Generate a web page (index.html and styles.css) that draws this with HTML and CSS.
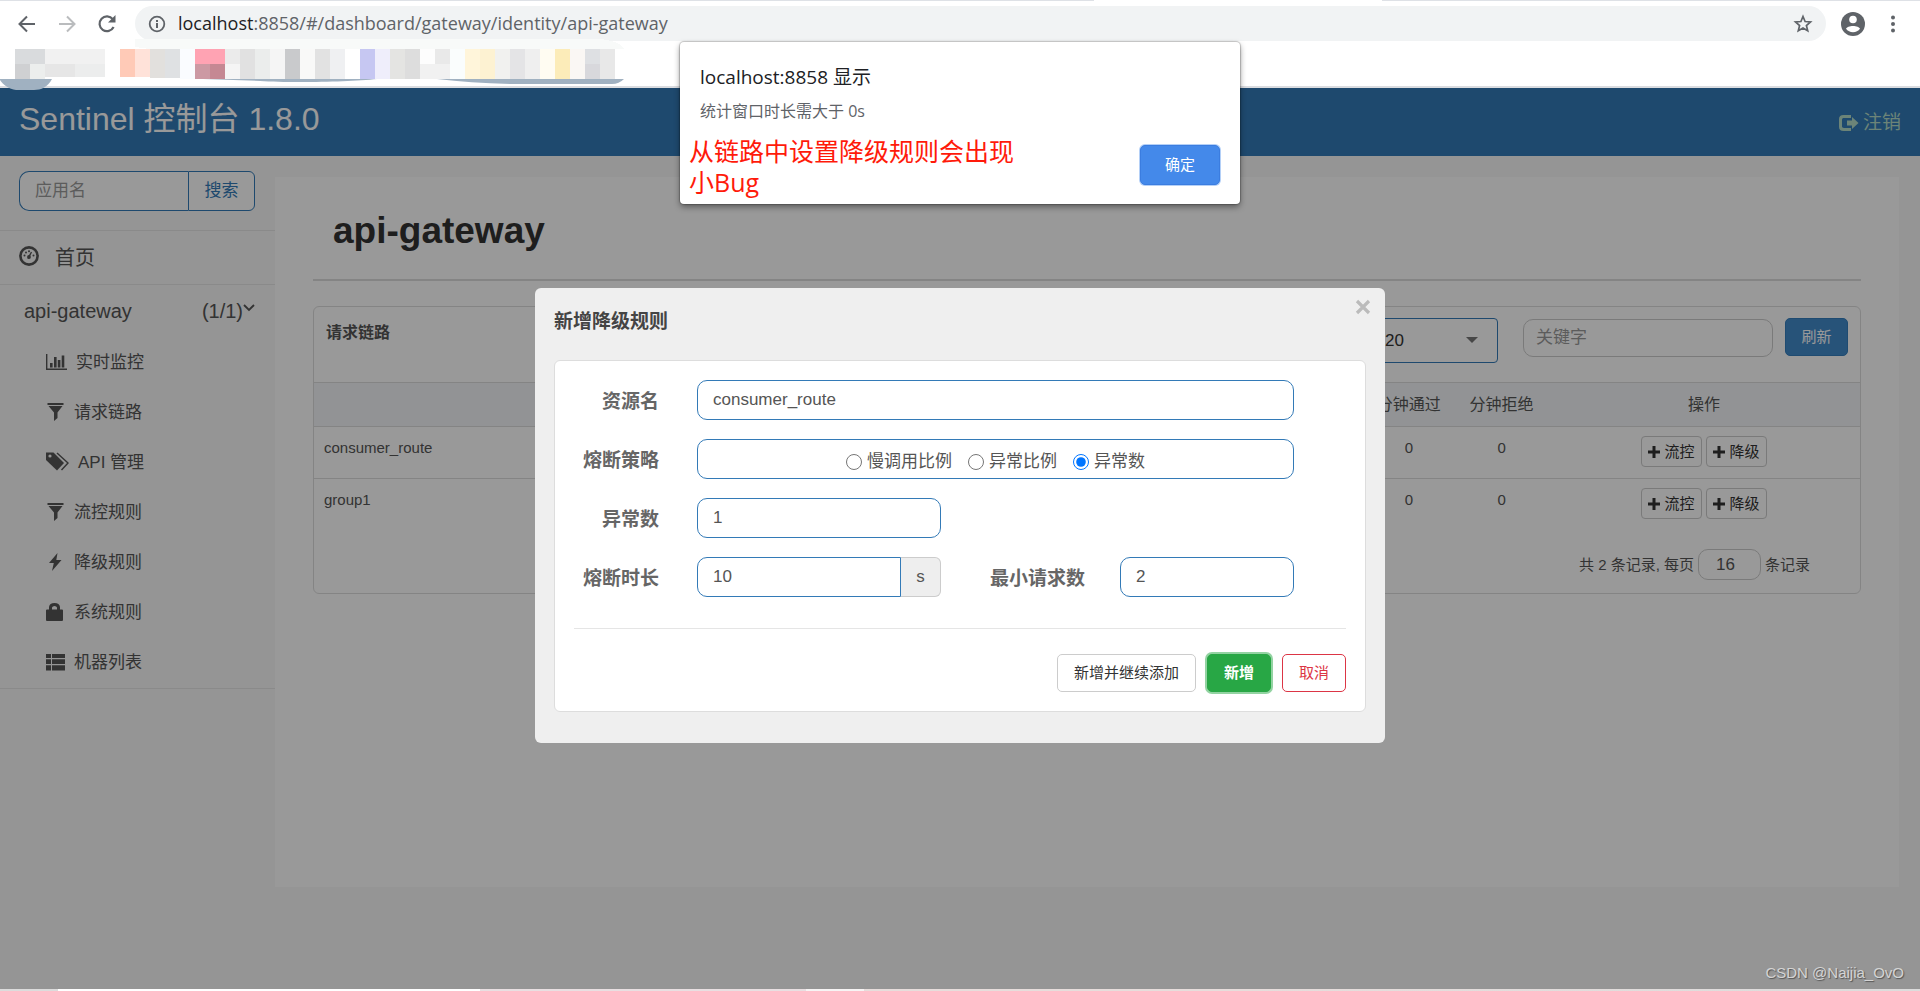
FILE: index.html
```html
<!DOCTYPE html>
<html lang="zh-CN">
<head>
<meta charset="utf-8">
<title>Sentinel 控制台 1.8.0</title>
<link rel="stylesheet" href="styles.css">
</head>
<body>
<header class="chrome">
  <div class="tabline"><span class="tabline-left"></span><span class="tabline-right"></span></div>
  <div class="toolbar">
    <button class="nav-btn" aria-label="Back"><svg width="20" height="20" viewBox="0 0 20 20" fill="none" stroke="#5f6368" stroke-width="2"><path d="M18 10H3M10 2.500L2.500 10L10 17.500"/></svg></button>
    <button class="nav-btn" aria-label="Forward"><svg width="20" height="20" viewBox="0 0 20 20" fill="none" stroke="#babcbe" stroke-width="2"><path d="M2 10H17M10 2.500L17.500 10L10 17.500"/></svg></button>
    <button class="nav-btn" aria-label="Reload"><svg width="20" height="20" viewBox="0 0 20 20"><path d="M16.600 13A7.400 7.400 0 1 1 15.800 5.200" fill="none" stroke="#5f6368" stroke-width="2.200"/><path d="M18.500 1V8.500H11z" fill="#5f6368"/></svg></button>
    <div class="omnibox">
      <svg width="18" height="18" viewBox="0 0 18 18"><circle cx="9" cy="9" r="7.300" fill="none" stroke="#5f6368" stroke-width="1.800"/><path d="M8 8h2v5H8zM8 5h2v2H8z" fill="#5f6368"/></svg>
      <span class="url"><b>localhost</b>:8858/#/dashboard/gateway/identity/api-gateway</span>
      <svg class="star" width="20" height="20" viewBox="0 0 20 20"><path d="M10 2.500l2.100 5 5.400.500-4.100 3.500 1.300 5.300L10 14l-4.700 2.800 1.300-5.300L2.500 8l5.400-.500z" fill="none" stroke="#5f6368" stroke-width="1.700"/></svg>
    </div>
    <svg class="avatar" width="24" height="24" viewBox="0 0 24 24"><circle cx="12" cy="12" r="12" fill="#5f6368"/><circle cx="12" cy="7.500" r="3.800" fill="#fff"/><path d="M5 16.800c1-3.900 13-3.900 14 0c-3 4.600-11 4.600-14 0z" fill="#fff"/></svg>
    <svg class="kebab" width="6" height="20" viewBox="0 0 6 20" fill="#5f6368"><circle cx="3" cy="3.500" r="2"/><circle cx="3" cy="10" r="2"/><circle cx="3" cy="16.500" r="2"/></svg>
  </div>
  <svg class="bookmarks" width="640" height="52" viewBox="0 0 640 52" shape-rendering="crispEdges">
    <path d="M135 0H600Q620 2 624 10H150L135 8z" fill="#f8faf9"/>
    <g>
      <path fill="#d9dbdd" d="M15 10h30v15H15z"/><path fill="#f1f1f1" d="M45 10h60v15H45z"/>
      <path fill="#cfd0d2" d="M15 25h15v15H15z"/><path fill="#eceeed" d="M30 25h15v15H30z"/><path fill="#e6e6e6" d="M45 25h30v13H45z"/><path fill="#eceded" d="M75 25h30v13H75z"/>
      <path fill="#ffcab7" d="M120 10h15v28h-15z"/><path fill="#ffe2d9" d="M135 10h15v28h-15z"/><path fill="#e2e0dd" d="M150 10h15v29h-15z"/><path fill="#dfe1e3" d="M165 10h15v29h-15z"/><path fill="#fafcff" d="M180 10h15v30h-15z"/>
      <path fill="#ffa3b3" d="M195 10h30v15h-30z"/><path fill="#cc99a3" d="M195 25h15v15h-15z"/><path fill="#c58893" d="M210 25h15v15h-15z"/>
      <path fill="#ebebeb" d="M225 10h15v15h-15z"/><path fill="#f5f5f5" d="M225 25h15v15h-15z"/><path fill="#e1e1e1" d="M240 10h15v30h-15z"/><path fill="#ebedec" d="M255 10h15v30h-15z"/><path fill="#f5f5f5" d="M270 10h15v30h-15z"/><path fill="#c9cacc" d="M285 10h15v30h-15z"/><path fill="#f9f9f8" d="M300 10h15v30h-15z"/><path fill="#e2e2e2" d="M315 10h15v30h-15z"/><path fill="#eff0f2" d="M330 10h15v30h-15z"/>
      <path fill="#c6c7f2" d="M360 10h15v30h-15z"/><path fill="#efeefb" d="M375 10h15v30h-15z"/><path fill="#e4e4e2" d="M390 10h15v30h-15z"/><path fill="#dddddd" d="M405 10h15v30h-15z"/><path fill="#fdfdfd" d="M420 10h15v15h-15z"/><path fill="#e9e9e9" d="M435 10h15v15h-15z"/><path fill="#f1f1f1" d="M420 25h30v15h-30z"/><path fill="#fafdfd" d="M450 10h15v30h-15z"/>
      <path fill="#fff5da" d="M465 10h15v30h-15z"/><path fill="#fdf2d2" d="M480 10h15v30h-15z"/><path fill="#f1f1ef" d="M495 10h15v30h-15z"/><path fill="#e4e4e6" d="M510 10h15v30h-15z"/><path fill="#efefef" d="M525 10h15v30h-15z"/><path fill="#fffcf2" d="M540 10h15v30h-15z"/><path fill="#fcecb9" d="M555 10h15v30h-15z"/><path fill="#faf7f4" d="M570 10h15v30h-15z"/><path fill="#dee0e3" d="M585 10h15v15h-15z"/><path fill="#d8d8dc" d="M585 25h15v15h-15z"/><path fill="#e8e8e8" d="M600 10h15v30h-15z"/>
    </g>
    <g fill="#a0b1c1" shape-rendering="auto"><path d="M0 40H52C48 48 41 51 34 51H16C9 50 3 46 0 41z"/><path d="M203 40H377C350 43 290 44 260 42z"/><path d="M437 40H624Q619 45 612 45H510Q470 44 437 40z"/></g>
  </svg>
</header>

<div class="app">
  <header class="topbar">
    <span class="brand">Sentinel 控制台 1.8.0</span>
    <a class="logout" href="#"><svg width="21" height="18" viewBox="0 0 21 18" fill="currentColor"><path d="M13 1H5.500C2.500 1 1 2.500 1 5v8c0 2.500 1.500 4 4.500 4H13v-3H6c-1.300 0-2-.500-2-1.700V5.700C4 4.500 4.700 4 6 4h7z"/><path d="M9 6.500h5V3l6.500 6L14 15v-3.500H9z"/></svg>注销</a>
  </header>
  <div class="body">
    <nav class="sidebar">
      <form class="search"><input type="text" placeholder="应用名" aria-label="应用名"><button type="button">搜索</button></form>
      <a class="home" href="#"><svg width="20" height="20" viewBox="0 0 20 20"><circle cx="10" cy="10" r="8.600" fill="none" stroke="#555" stroke-width="2.600"/><path d="M9 12.500L12.500 6" stroke="#555" stroke-width="1.400"/><circle cx="10" cy="11" r="1.900" fill="#555"/><g fill="#555"><circle cx="5.500" cy="9.500" r="1"/><circle cx="7" cy="6.500" r="1"/><circle cx="10" cy="5.200" r="1"/><circle cx="14.500" cy="9.500" r="1"/></g></svg>首页</a>
      <div class="group">
        <a class="group-head" href="#"><span>api-gateway</span><span class="count">(1/1)<svg width="12" height="8" viewBox="0 0 12 8" fill="none" stroke="#555" stroke-width="1.800"><path d="M1 1L6 6L11 1"/></svg></span></a>
        <ul>
          <li><a href="#"><svg width="21" height="18" viewBox="0 0 21 18" fill="#555"><path d="M0 1h1.400v14.600H21V17H0z"/><path d="M4 10h2.600v4.500H4zM8 4h2.600v10.500H8zM11.800 7h2.600v7.500h-2.600zM15.700 2.500h2.600v12h-2.600z"/></svg>实时监控</a></li>
          <li><a href="#"><svg width="19" height="18" viewBox="0 0 19 18" fill="#555"><path d="M1.500 0h16v2h-16zM2.500 3h14L11.500 9.500V15L8 18V9.500z"/></svg>请求链路</a></li>
          <li><a href="#"><svg width="23" height="19" viewBox="0 0 23 19"><path d="M0 .500h7.500L18 11L11 18.500L0 8z" fill="#555"/><circle cx="4" cy="4" r="1.600" fill="#f8f8f8"/><path d="M11 1L22 11L15.500 18" fill="none" stroke="#555" stroke-width="1.400"/></svg>API 管理</a></li>
          <li><a href="#"><svg width="19" height="18" viewBox="0 0 19 18" fill="#555"><path d="M1.500 0h16v2h-16zM2.500 3h14L11.500 9.500V15L8 18V9.500z"/></svg>流控规则</a></li>
          <li><a href="#"><svg width="19" height="18" viewBox="0 0 19 18" fill="#555"><path d="M11.500 0L3 10h4.800L6 18L15.500 7H10.300z"/></svg>降级规则</a></li>
          <li><a href="#"><svg width="19" height="18" viewBox="0 0 19 18" fill="#555"><path d="M0 7.500Q0 6.500 1 6.500H3V4Q3.500 0 8.500 0T14 4V6.500H16Q17 6.500 17 7.500V17Q17 18 16 18H1Q0 18 0 17zM6 6.500H11V4.500Q10.500 3 8.500 3T6 4.500z"/></svg>系统规则</a></li>
          <li><a href="#"><svg width="19" height="18" viewBox="0 0 19 18" fill="#555"><path d="M0 1h5v4H0zM6 1h13v4H6zM0 6.300h5v4.700H0zM6 6.300h13v4.700H6zM0 12.300h5v5.200H0zM6 12.300h13v5.200H6z"/></svg>机器列表</a></li>
        </ul>
      </div>
    </nav>
    <main class="content">
      <h1>api-gateway</h1>
      <section class="card">
        <div class="card-head">
          <h2>请求链路</h2>
          <div class="filters">
            <span class="picker"><select aria-label="机器"><option>20</option></select></span>
            <input class="keyword" type="text" placeholder="关键字" aria-label="关键字">
            <button class="refresh">刷新</button>
          </div>
        </div>
        <table>
          <colgroup><col><col class="num"><col class="num"><col class="ops"></colgroup>
          <thead><tr><th></th><th>分钟通过</th><th>分钟拒绝</th><th>操作</th></tr></thead>
          <tbody>
            <tr><td>consumer_route</td><td>0</td><td>0</td><td><button class="mini"><svg width="12" height="12" viewBox="0 0 12 12"><path d="M4.500 0h3v4.500H12v3H7.500V12h-3V7.500H0v-3h4.500z"/></svg>流控</button><button class="mini"><svg width="12" height="12" viewBox="0 0 12 12"><path d="M4.500 0h3v4.500H12v3H7.500V12h-3V7.500H0v-3h4.500z"/></svg>降级</button></td></tr>
            <tr><td>group1</td><td>0</td><td>0</td><td><button class="mini"><svg width="12" height="12" viewBox="0 0 12 12"><path d="M4.500 0h3v4.500H12v3H7.500V12h-3V7.500H0v-3h4.500z"/></svg>流控</button><button class="mini"><svg width="12" height="12" viewBox="0 0 12 12"><path d="M4.500 0h3v4.500H12v3H7.500V12h-3V7.500H0v-3h4.500z"/></svg>降级</button></td></tr>
          </tbody>
        </table>
        <div class="pager"><label for="size">共 2 条记录, 每页</label><input id="size" type="text" value="16"><span>条记录</span></div>
      </section>
    </main>
  </div>

  <div class="overlay">
    <form class="modal" role="dialog" aria-labelledby="mtitle">
      <button type="button" class="close" aria-label="关闭"><svg width="16" height="16" viewBox="0 0 16 16" stroke="#bbb" stroke-width="3.200"><path d="M2 2L14 14M14 2L2 14"/></svg></button>
      <h2 id="mtitle">新增降级规则</h2>
      <div class="sheet">
        <div class="row"><label for="res">资源名</label><input id="res" type="text" value="consumer_route"></div>
        <div class="row"><span class="label">熔断策略</span>
          <div class="radios">
            <label><input type="radio" name="grade">慢调用比例</label>
            <label><input type="radio" name="grade">异常比例</label>
            <label><input type="radio" name="grade" checked>异常数</label>
          </div>
        </div>
        <div class="row"><label for="cnt">异常数</label><div class="pair"><input id="cnt" class="half" type="text" value="1"></div></div>
        <div class="row"><label for="win">熔断时长</label>
          <div class="pair">
            <div class="half addon"><input id="win" type="text" value="10"><span>s</span></div>
            <label class="mid" for="min">最小请求数</label>
            <input id="min" class="small" type="text" value="2">
          </div>
        </div>
        <div class="actions">
          <button type="button" class="btn">新增并继续添加</button>
          <button type="button" class="btn primary">新增</button>
          <button type="button" class="btn danger">取消</button>
        </div>
      </div>
    </form>
    <span class="watermark">CSDN @Naijia_OvO</span>
  </div>
</div>
<footer class="strip"></footer>

<div class="alert" role="alertdialog" aria-labelledby="atitle">
  <h2 id="atitle">localhost:8858 显示</h2>
  <p class="msg">统计窗口时长需大于 0s</p>
  <div class="alert-foot">
    <p class="note">从链路中设置降级规则会出现小Bug</p>
    <button class="ok">确定</button>
  </div>
</div>
</body>
</html>
```
FILE: styles.css
```css
* { box-sizing: border-box; }
body {
  margin: 0;
  min-height: 100vh;
  display: flex;
  flex-direction: column;
  position: relative;
  background: #fff;
  color: #555;
  font: 17px/24px "Liberation Sans", "Noto Sans CJK SC", sans-serif;
}
h1, h2, p, ul { margin: 0; padding: 0; }
ul { list-style: none; }
a { color: inherit; text-decoration: none; }
svg { flex: none; display: block; }
button, input, select { font: inherit; color: inherit; margin: 0; }
button { padding: 0; }
input { min-width: 0; }

/* browser frame */
.chrome { height: 88px; border-bottom: 2px solid #dadce0; background: #fff; }
.tabline { display: flex; justify-content: space-between; height: 1px; }
.tabline span { background: #dee1e6; }
.tabline-left { width: 57%; }
.tabline-right { width: 28%; }
.toolbar { display: flex; align-items: center; height: 35px; margin-top: 5px; padding: 0 24px 0 17px; }
.nav-btn { width: 20px; margin-right: 20px; border: 0; background: none; }
.nav-btn + .nav-btn + .nav-btn { margin-right: 18px; }
.omnibox { flex: 1; display: flex; align-items: center; height: 35px; padding: 0 13px; border-radius: 18px; background: #f1f3f4; }
.url { margin-left: 12px; padding-bottom: 2px; flex: 1; font: 18px/26px "Open Sans", sans-serif; color: #5f6368; }
.url b { font-weight: 400; color: #202124; }
.avatar { margin-left: 15px; }
.kebab { margin-left: 25px; }
.bookmarks { position: relative; z-index: 3; margin-top: -2px; }

/* application */
.app { position: relative; flex: 1; display: flex; flex-direction: column; background: #f8f8f8; }
.topbar { display: flex; align-items: center; justify-content: space-between; height: 68px; padding: 0 19px; background: #337ab7; color: #fff; }
.brand { font-size: 32px; line-height: 40px; padding-bottom: 6px; }
.logout { display: flex; align-items: center; gap: 4px; padding-top: 2px; font-size: 19px; color: #b4dcc8; }
.body { display: flex; flex: 1; }
.sidebar { width: 275px; flex: none; }
.search { display: flex; height: 75px; padding: 15px 20px 19px 19px; border-bottom: 1px solid #e7e7e7; }
.search input { flex: 1; padding: 0 15px; border: 1px solid #337ab7; border-right: 0; border-radius: 10px 0 0 10px; background: #fff; }
.search button { width: 67px; border: 1px solid #337ab7; border-radius: 0 6px 6px 0; background: #fff; color: #337ab7; }
::placeholder { color: #999; opacity: 1; }
.home { display: flex; align-items: center; gap: 16px; height: 54px; padding-left: 19px; border-bottom: 1px solid #e7e7e7; font-size: 20px; }
.home svg { margin-bottom: 4px; }
.group { border-bottom: 1px solid #e7e7e7; padding: 1px 0 0; }
.group ul { padding-top: 2px; }
.group-head { display: flex; justify-content: space-between; align-items: center; height: 50px; padding: 0 20px 0 24px; font-size: 20px; }
.count { display: flex; align-items: center; }
.count svg { margin-bottom: 7px; }
.group li a { display: flex; align-items: center; gap: 9px; height: 50px; padding-left: 46px; }
.group li svg { margin-bottom: 3px; }

.content { flex: 1; min-height: 710px; margin: 21px 21px 102px 0; padding: 0 38px; background: #fff; }
h1 { height: 104px; padding: 31px 20px 0; border-bottom: 2px solid #ddd; font-size: 37px; line-height: 46px; color: #333; }
.card { margin-top: 25px; border: 1px solid #ddd; border-radius: 6px; }
.card-head { display: flex; justify-content: space-between; height: 75px; padding: 11px 12px 0; }
.card-head h2 { font-size: 16px; line-height: 30px; }
.filters { display: flex; align-items: flex-start; }
.picker { position: relative; width: 300px; margin-right: 25px; }
.picker select { width: 100%; height: 45px; padding: 0 12px 0 186px; border: 1px solid #337ab7; border-radius: 4px; background: #fff; color: #333; appearance: none; }
.picker::after { content: ""; position: absolute; right: 20px; top: 19px; border: 6px solid transparent; border-top-color: #777; border-bottom: 0; }
.keyword { width: 250px; height: 38px; margin: 1px 12px 0 0; padding: 0 12px; border: 1px solid #ccc; border-radius: 10px; }
.refresh { width: 63px; height: 38px; border: 1px solid #357ebd; border-radius: 5px; background: #428bca; color: #fff; font-size: 15px; }
table { width: 100%; border-collapse: collapse; table-layout: fixed; font-size: 15px; }
.num { width: 6%; }
.ops { width: 312px; }
th { height: 44px; padding: 0; border: solid #ddd; border-width: 1px 0; background: #f3f5f8; font-size: 16px; font-weight: 400; }
td { height: 52px; padding: 9px 0 0; vertical-align: top; text-align: center; }
td:first-child { padding-left: 10px; text-align: left; }
tbody tr + tr { border-top: 1px solid #ddd; }
.mini { display: inline-flex; align-items: center; justify-content: center; gap: 4px; width: 61px; height: 31px; border: 1px solid #ccc; border-radius: 4px; background: #fff; color: #333; font-size: 15px; }
.mini svg { fill: #333; }
.mini + .mini { margin-left: 4px; }
.pager { display: flex; align-items: center; justify-content: flex-end; gap: 4px; height: 62px; padding: 6px 50px 0 0; font-size: 15px; }
.pager input { width: 63px; height: 31px; padding: 0 17px; border: 1px solid #ccc; border-radius: 10px; font-size: 17px; }

/* modal */
.overlay { position: absolute; inset: 0; background: rgba(0, 0, 0, .4); padding-top: 200px; }
.modal { position: relative; width: 850px; max-width: 100%; margin: 0 auto; padding: 20px 19px 31px; border-radius: 6px; background: #efefef; }
.modal h2 { font-size: 19px; line-height: 28px; color: #444; }
.close { position: absolute; right: 14px; top: 11px; border: 0; background: none; }
.sheet { margin-top: 24px; padding: 19px; border: 1px solid #ddd; border-radius: 6px; background: #fff; }
.row { display: flex; align-items: center; gap: 38px; height: 40px; margin: 0 52px 19px 0; }
.row > label, .label, .mid { width: 85px; padding-top: 4px; text-align: right; font-size: 19px; font-weight: 700; color: #666; }
.row > input, .radios, .pair { flex: 1; }
.row > input, .radios, .half, .small, .addon input { height: 40px; border: 1px solid #337ab7; border-radius: 10px; background: #fff; }
.row input[type="text"] { padding: 0 15px; }
.radios { display: flex; align-items: center; justify-content: center; gap: 16px; padding-top: 5px; }
.radios label { display: flex; align-items: center; gap: 5px; }
.radios input { width: 16px; height: 16px; accent-color: #0075ff; }
.pair { display: flex; align-items: center; }
.half { width: 244px; }
.half.addon { display: flex; border: 0; }
.addon input { flex: 1; border-radius: 10px 0 0 10px; }
.addon span { width: 40px; border: 1px solid #ccc; border-left: 0; border-radius: 0 6px 6px 0; background: #eee; text-align: center; line-height: 38px; }
.mid { flex: 1; margin-right: 35px; }
.small { width: 174px; }
.actions { display: flex; justify-content: flex-end; gap: 11px; margin-top: 31px; padding-top: 25px; border-top: 1px solid #e5e5e5; }
.btn { height: 38px; padding: 0 16px; border: 1px solid #ccc; border-radius: 5px; background: #fff; color: #333; font-size: 15px; }
.primary { border-color: #28a745; background: #28a745; color: #fff; font-weight: 700; box-shadow: 0 0 0 2px #93d3a2; }
.danger { border-color: #dc3545; color: #dc3545; }
.watermark { position: absolute; right: 16px; bottom: 4px; font-size: 15px; color: #d4d4d4; text-shadow: 1px 1px 1px #555; }
.strip { height: 2px; background: linear-gradient(90deg, #dcdcdc 3%, #fff 3% 25%, #e8dfe1 25% 42%, #f6f4f4 42% 45%, #e6dddb 45% 65%, #dcdcdc); }

/* browser alert */
.alert { position: absolute; z-index: 5; top: 42px; left: 0; right: 0; width: 560px; max-width: 100%; margin: 0 auto; padding: 20px 20px 6px; border-radius: 4px; background: #fff; box-shadow: 0 0 1px 1px rgba(0, 0, 0, .2), 0 3px 6px rgba(0, 0, 0, .4); }
.alert h2 { font: 19px/30px "Open Sans", "Noto Sans CJK SC", sans-serif; color: #202124; }
.msg { margin-top: 7px; font: 16px/24px "Open Sans", "Noto Sans CJK SC", sans-serif; color: #5f6368; }
.alert-foot { display: flex; justify-content: space-between; align-items: flex-start; margin-top: 13px; }
.note { width: 340px; margin-left: -11px; font: 25px/31px "Open Sans", "Noto Sans CJK SC", sans-serif; color: #ff1a0a; }
.ok { width: 80px; height: 40px; margin-top: 9px; border: 1px solid #3b7de0; border-radius: 5px; background: #4489ea; color: #fff; font-size: 15px; box-shadow: 0 0 0 1px #b4d0f7; }
```
